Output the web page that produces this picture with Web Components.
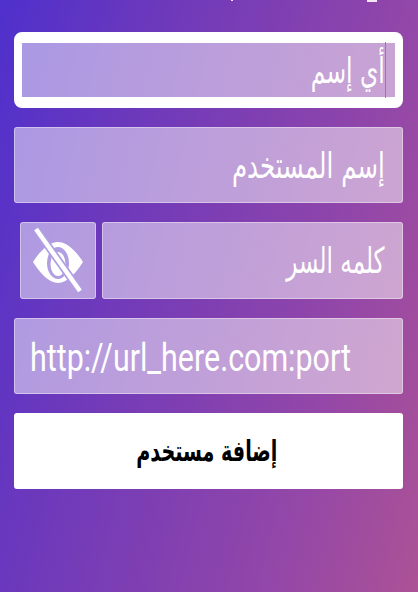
<!DOCTYPE html>
<html lang="ar">
<head>
<meta charset="utf-8">
<style>
html, body { margin: 0; height: 100%; }
body {
    width: 418px;
    height: 592px;
    overflow: hidden;
    background: linear-gradient(104deg, #4f30cc 0%, #6a38bd 26%, #7f3fb2 50%, #9347a8 74%, #ac5296 100%);
    font-family: "DejaVu Sans", sans-serif;
}
</style>
</head>
<body>
<add-user-form></add-user-form>
<script>
// the screenshot is stretched tall, so labels get narrowed with scaleX
class TextBox extends HTMLElement {
    constructor() {
        super();
        this.attachShadow({mode: "open"});
        this.shadowRoot.innerHTML = `
<style>
:host {
    display: flex;
    align-items: center;
    box-sizing: border-box;
    height: 76px;
    padding: 0 17px;
    background: rgba(255,255,255,0.5);
    border: 1px solid rgba(255,255,255,0.4);
    border-radius: 3px;
    color: #fff;
    white-space: nowrap;
}
:host([lang="ar"]) { direction: rtl; font-size: 36px; }
:host([lang="en"]) { font-family: Roboto, sans-serif; font-size: 39px; padding: 3px 15px 0; }
.label { display: inline-block; transform-origin: right center; transform: scaleX(var(--squeeze, 0.68)); }
:host([lang="en"]) .label { transform-origin: left center; transform: scaleX(0.78); }
:host([focused]) {
    border-style: solid;
    border-color: #fff;
    border-width: 11px 8px;
    border-radius: 8px;
    padding: 0 9px;
    background-clip: padding-box;
    --squeeze: 0.65;
}
.caret { display: none; flex: none; width: 1px; height: 56px; background: #8f7f9f; }
:host([focused]) .caret { display: block; }
</style>
<span class="caret"></span><span class="label"><slot></slot></span>`;
    }
}

class EyeToggle extends HTMLElement {
    constructor() {
        super();
        this.attachShadow({mode: "open"});
        this.shadowRoot.innerHTML = `
<style>
:host {
    display: block;
    box-sizing: border-box;
    width: 76px;
    height: 77px;
    background: rgba(255,255,255,0.5);
    border: 1px solid rgba(255,255,255,0.4);
    border-radius: 3px;
    overflow: hidden;
}
svg { display: block; }
</style>
<svg width="74" height="75" viewBox="21 223 74 75">
    <path fill="#fff" d="M33 262C40 251 49 242 58 242 67 242 76 251 83 262 76 273 67 283 58 283 49 283 40 273 33 262Z"/>
    <ellipse cx="58" cy="263" rx="11" ry="16" fill="#b09fe2"/>
    <ellipse cx="58" cy="264" rx="7.5" ry="12" fill="#fff"/>
    <path d="M36 229 80 291" stroke="#b09fe2" stroke-width="8"/>
    <path d="M36 229 80 291" stroke="#fff" stroke-width="4.5"/>
</svg>`;
    }
}

class SubmitButton extends HTMLElement {
    constructor() {
        super();
        this.attachShadow({mode: "open"});
        this.shadowRoot.innerHTML = `
<style>
:host {
    display: flex;
    align-items: center;
    justify-content: center;
    height: 76px;
    padding-right: 4px;
    background: #fff;
    border-radius: 3px;
    color: #000;
    font-size: 29px;
    font-weight: bold;
    direction: rtl;
    white-space: nowrap;
}
span { display: inline-block; transform: scaleX(0.66); }
</style>
<span><slot></slot></span>`;
    }
}

class AddUserForm extends HTMLElement {
    constructor() {
        super();
        this.attachShadow({mode: "open"});
        this.shadowRoot.innerHTML = `
<style>
:host {
    display: flex;
    flex-direction: column;
    gap: 19px;
    padding: 32px 15px 0 14px;
}
.row { display: flex; gap: 6px; padding-left: 6px; }
.row text-box { flex: 1; height: 77px; --squeeze: 0.64; }
.clip { position: absolute; background: #f3e6f6; }
</style>
<div class="clip" style="left:367px;top:0;width:10px;height:2px"></div>
<div class="clip" style="left:231px;top:0;width:2px;height:1px"></div>
<text-box lang="ar" focused>أي إسم</text-box>
<text-box lang="ar">إسم المستخدم</text-box>
<div class="row">
    <eye-toggle></eye-toggle>
    <text-box lang="ar">كلمه السر</text-box>
</div>
<text-box lang="en">http://url_here.com:port</text-box>
<submit-button>إضافة مستخدم</submit-button>`;
    }
}

customElements.define("text-box", TextBox);
customElements.define("eye-toggle", EyeToggle);
customElements.define("submit-button", SubmitButton);
customElements.define("add-user-form", AddUserForm);
</script>
</body>
</html>
